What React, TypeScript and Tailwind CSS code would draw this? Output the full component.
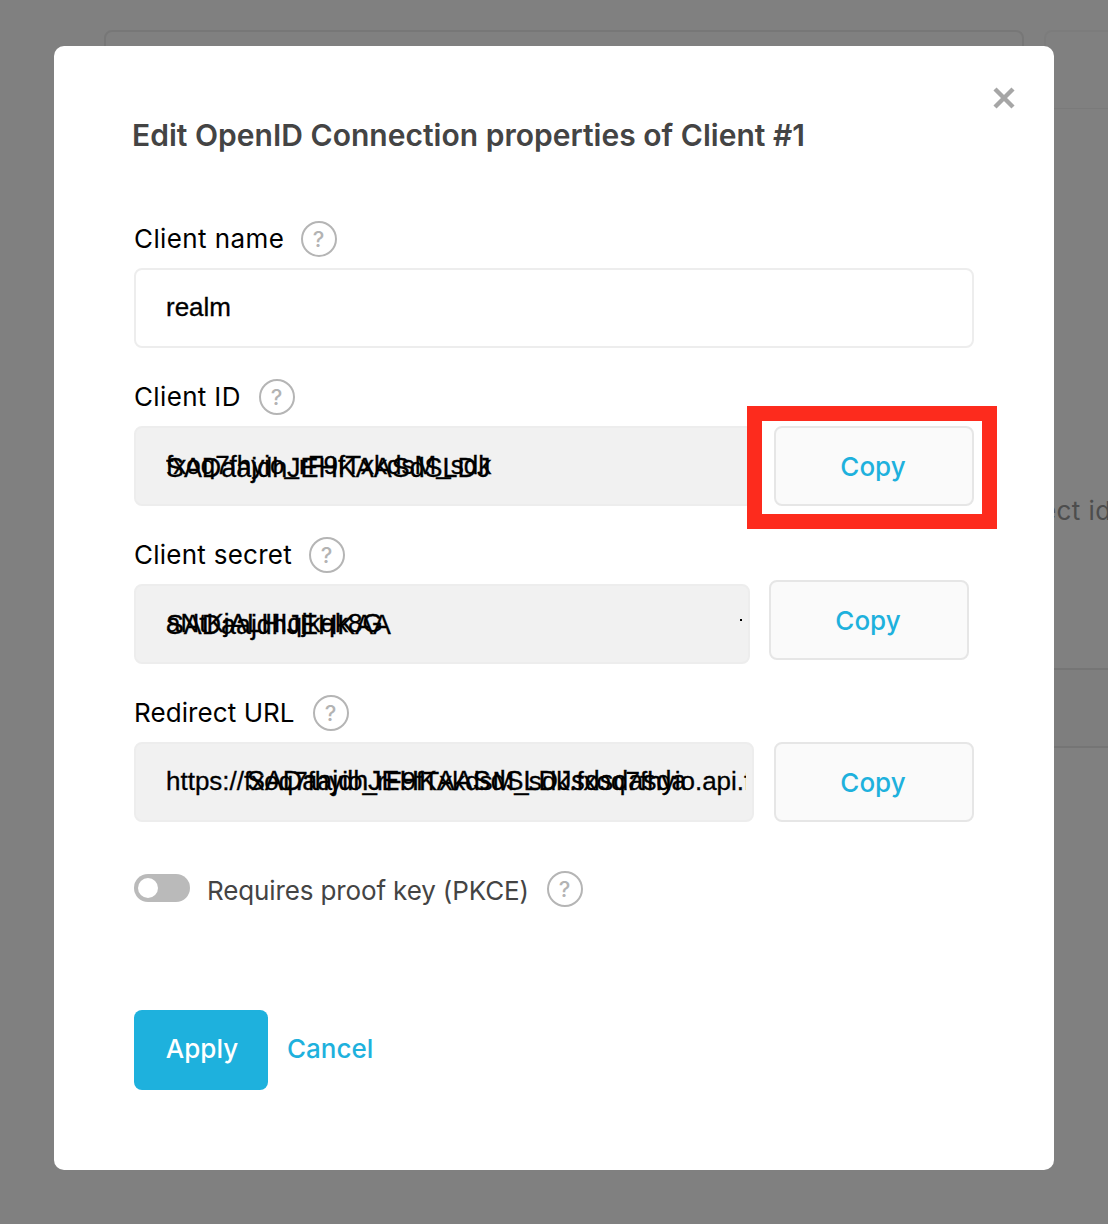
import type { ReactNode } from "react";

function HelpIcon({ className = "" }: { className?: string }) {
  return (
    <span
      className={`flex size-9 shrink-0 items-center justify-center rounded-full border-2 border-[#b5b5b5] pr-px text-[22px] leading-none font-medium text-[#b3b3b3] ${className}`}
    >
      ?
    </span>
  );
}

function Label({ text, className = "" }: { text: string; className?: string }) {
  return (
    <div className="flex h-9 items-center">
      <span className={`whitespace-nowrap text-black ${className}`}>{text}</span>
      <HelpIcon />
    </div>
  );
}

function CopyButton({ className = "" }: { className?: string }) {
  return (
    <button
      className={`h-20 w-[200px] shrink-0 rounded-lg border-2 border-[#e6e6e6] bg-[#fafafa] pt-px pr-0.5 text-[26px] font-medium text-[#1eb1dd] ${className}`}
    >
      Copy
    </button>
  );
}

const valueFont = "font-['Liberation_Sans',Arial,sans-serif] [-webkit-text-stroke:0.3px_black]";

function ReadonlyField({ className, children }: { className: string; children: ReactNode }) {
  return (
    <div className={`h-20 shrink-0 rounded-lg border-2 border-[#ededed] bg-[#f1f1f1] pr-1.5 pl-[30px] ${className}`}>
      <div className={`relative flex h-full items-center overflow-hidden pb-0.5 whitespace-nowrap text-black ${valueFont}`}>
        {children}
      </div>
    </div>
  );
}

function PageBehind() {
  return (
    <div className="absolute inset-0 flex overflow-hidden pt-[30px] pl-[104px]">
      <div className="h-[1000px] w-[920px] shrink-0 rounded-lg border-2 border-[#777777]" />
      <div className="ml-5 h-[1000px] w-[400px] shrink-0 rounded-t-lg border-2 border-b-0 border-[#7c7c7c]">
        <div className="h-[77px] border-b border-[#7a7a7a]" />
        <div className="-ml-[5px] pt-[382px] text-[26px] leading-10 tracking-[0.4px] whitespace-nowrap text-[#4d4d4d]">ect id</div>
        <div className="mt-[137px] h-20 border-y-2 border-[#757575] bg-[#7e7e7e]" />
      </div>
    </div>
  );
}

export default function App() {
  return (
    <div className="relative h-[1224px] w-[1108px] overflow-hidden bg-[#808080] font-['Inter',sans-serif] text-[26px] leading-9">
      <PageBehind />
      <div className="relative mt-[46px] ml-[54px] h-[1124px] w-[1000px] rounded-[10px] bg-white px-20">
        <button className="absolute top-[41px] right-[39px] size-[22px]" aria-label="Close">
          <svg viewBox="0 0 22 22" className="size-full" fill="none" stroke="#a6a6a6" strokeWidth="4.4">
            <path d="M2 2 20 20M20 2 2 20" />
          </svg>
        </button>

        <h2 className="-ml-[2px] pt-[71px] text-[30px] leading-9 font-semibold tracking-[0.02px] whitespace-nowrap text-[#444444]">
          Edit OpenID Connection properties of Client #1
        </h2>

        <div className="mt-[68px] flex flex-col">
          <Label text="Client name" className="w-[167px] tracking-[0.4px]" />
          <div className={`mt-[11px] flex h-20 w-[840px] items-center rounded-lg border-2 border-[#ededed] pb-0.5 pl-[30px] text-black ${valueFont}`}>
            realm
          </div>

          <div className="mt-[31px]">
            <Label text="Client ID" className="w-[125px] tracking-[0.35px]" />
          </div>
          <div className="mt-[11px] flex h-20">
            <ReadonlyField className="w-[620px]">
              <span>fxoq7fhyio_rF9fTxkdsM_sdk</span>
              <span className="absolute top-[22px] left-0 text-[26.9px]">SADaajdhJEHKAASdSLDJ</span>
            </ReadonlyField>
            <div className="relative -mt-5 -ml-[7px] h-[123px] w-[250px] shrink-0 border-[15px] border-[#fd2b1d] bg-white pt-[5px] pl-3">
              <CopyButton />
            </div>
          </div>

          <div className="mt-[31px]">
            <Label text="Client secret" className="w-[175px] tracking-[0.25px]" />
          </div>
          <div className="mt-[11px] flex h-20">
            <ReadonlyField className="w-[616px]">
              <span>aNtKjALHIqjkqk8G</span>
              <span className="absolute top-[21px] left-0 text-[26.8px]">SADaajdhJEHKAA</span>
              <span className="absolute top-[33px] right-0 h-0.5 w-0.5 bg-black" />
            </ReadonlyField>
            <CopyButton className="-mt-1 ml-[19px]" />
          </div>

          <div className="mt-[31px]">
            <Label text="Redirect URL" className="w-[179px] tracking-[0.08px]" />
          </div>
          <div className="mt-[11px] flex h-20">
            <ReadonlyField className="w-[620px]">
              <span>https://fxoq7fhyio_rF9fTxkdsM_sdk.fxoq7fhyio.api.f</span>
              <span className="absolute top-[19px] left-[81px] text-[26.9px]">SADaajdhJEHKAASdSLDJsdsdasda</span>
            </ReadonlyField>
            <CopyButton className="ml-5" />
          </div>
        </div>

        <div className="mt-[49px] flex h-9 items-center">
          <span className="-mt-0.5 flex h-7 w-14 items-center rounded-full bg-[#bababa] pl-1">
            <span className="size-5 rounded-full bg-white" />
          </span>
          <span className="mt-[3px] ml-[17px] w-[340px] tracking-[-0.13px] whitespace-nowrap text-[#444444]">
            Requires proof key (PKCE)
          </span>
          <HelpIcon />
        </div>

        <div className="mt-[103px] flex h-20 items-center">
          <button className="h-20 w-[134px] rounded-lg bg-[#1eb1dd] pb-[3px] pl-0.5 font-medium text-white">Apply</button>
          <button className="ml-[19px] pb-[3px] font-medium text-[#1eb1dd]">Cancel</button>
        </div>
      </div>
    </div>
  );
}
